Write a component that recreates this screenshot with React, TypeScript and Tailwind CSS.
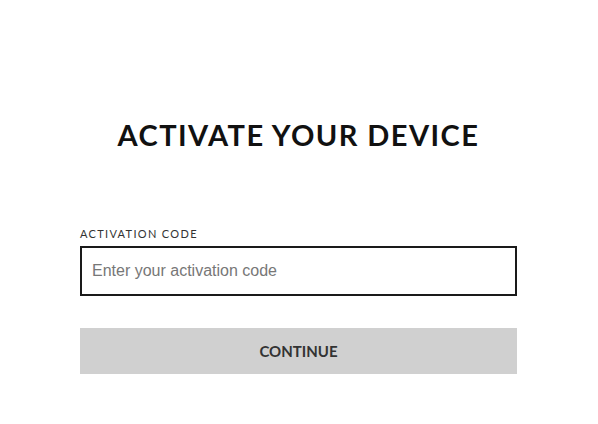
export default function App() {
  return (
    <div className="min-h-[424px] w-full bg-white font-['Lato',sans-serif]">
      <div className="ml-[80px] flex w-[437px] flex-col pt-[117px]">
        <h1 className="text-center text-[29px] font-bold leading-9 tracking-[0.05em] text-[#111]">
          ACTIVATE YOUR DEVICE
        </h1>

        <label className="mt-[73px] text-[11px] leading-4 tracking-[0.12em] text-[#333]">
          ACTIVATION CODE
        </label>
        <input
          type="text"
          placeholder="Enter your activation code"
          className="mt-[4px] h-[50px] w-full border-2 border-[#1a1a1a] px-[10px] font-['Liberation_Sans',sans-serif] text-base text-[#333] placeholder:text-[#777] outline-none"
        />

        <button className="mt-[32px] h-[46px] w-full bg-[#d0d0d0] text-[15px] font-bold text-[#333]">
          CONTINUE
        </button>
      </div>
    </div>
  );
}
